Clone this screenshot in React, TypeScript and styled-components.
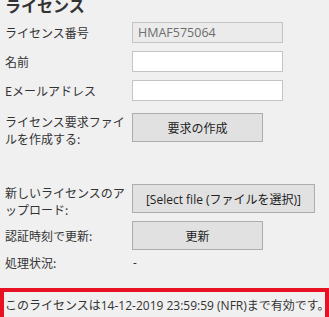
import React from 'react';
import styled, { createGlobalStyle } from 'styled-components';

const GlobalStyle = createGlobalStyle`
  html, body {
    margin: 0;
    padding: 0;
    background: #f0f0f0;
    overflow: hidden;
  }
  body {
    font-family: "Open Sans", "Noto Sans CJK JP", sans-serif;
    color: #333;
  }
`;

const Page = styled.div`
  width: 329px;
  height: 317px;
  overflow: hidden;
`;

const Content = styled.div`
  padding-left: 5px;
`;

const Title = styled.h2`
  margin: -5px 0 0;
  font-family: "Noto Sans CJK JP", sans-serif;
  font-size: 16px;
  font-weight: 700;
  line-height: 20px;
  color: #333;
`;

const Row = styled.div<{ $top: number; $start?: boolean }>`
  display: grid;
  grid-template-columns: 127px auto;
  align-items: ${({ $start }) => ($start ? 'start' : 'center')};
  margin-top: ${({ $top }) => $top}px;
`;

// two-line labels hang below the button, so they don't push the next row down
const Label = styled.div<{ $multi?: boolean }>`
  font-family: "Noto Sans CJK JP", sans-serif;
  font-size: 12px;
  line-height: ${({ $multi }) => ($multi ? 17 : 16)}px;
  margin-bottom: ${({ $multi }) => ($multi ? -5 : 0)}px;
  color: #333;
`;

const TextInput = styled.input<{ $readOnlyLook?: boolean }>`
  box-sizing: border-box;
  width: 151px;
  height: 21px;
  margin: 0;
  padding: 0 5px;
  border: 1px solid #c4c4c4;
  background: ${({ $readOnlyLook }) => ($readOnlyLook ? '#ebebeb' : '#ffffff')};
  font-family: "Open Sans", sans-serif;
  font-size: 12.5px;
  color: #6d6d6d;
  outline: none;
`;

const Button = styled.button<{ $wide?: boolean }>`
  box-sizing: border-box;
  width: ${({ $wide }) => ($wide ? 183 : 131)}px;
  height: 29px;
  margin: 0;
  padding: 0;
  border: 1px solid #adadad;
  background: #e1e1e1;
  font-family: "Open Sans", "Noto Sans CJK JP", sans-serif;
  font-size: 12px;
  color: #222;
  white-space: nowrap;
`;

const Status = styled.span`
  font-size: 12px;
  line-height: 16px;
  color: #333;
  padding-left: 1px;
`;

const Notice = styled.div`
  box-sizing: border-box;
  width: 329px;
  margin-top: 17px;
  border: 4px solid #e81123;
  padding: 5px 1px 6px;
  font-family: "Open Sans", "Noto Sans CJK JP", sans-serif;
  font-size: 12px;
  line-height: 18px;
  color: #333;
  white-space: nowrap;
  overflow: hidden;
`;

export default function App() {
  return (
    <Page>
      <GlobalStyle />
      <Content>
        <Title>ライセンス</Title>
        <Row $top={7}>
          <Label>ライセンス番号</Label>
          <TextInput $readOnlyLook readOnly value="HMAF575064" />
        </Row>
        <Row $top={8}>
          <Label>名前</Label>
          <TextInput defaultValue="" />
        </Row>
        <Row $top={8}>
          <Label>Eメールアドレス</Label>
          <TextInput defaultValue="" />
        </Row>
        <Row $top={12} $start>
          <Label $multi>ライセンス要求ファイルを作成する:</Label>
          <Button>要求の作成</Button>
        </Row>
        <Row $top={42} $start>
          <Label $multi>新しいライセンスのアップロード:</Label>
          <Button $wide>[Select file (ファイルを選択)]</Button>
        </Row>
        <Row $top={8}>
          <Label>認証時刻で更新:</Label>
          <Button>更新</Button>
        </Row>
        <Row $top={5}>
          <Label>処理状況:</Label>
          <Status>-</Status>
        </Row>
      </Content>
      <Notice>このライセンスは14-12-2019 23:59:59 (NFR)まで有効です。</Notice>
    </Page>
  );
}
